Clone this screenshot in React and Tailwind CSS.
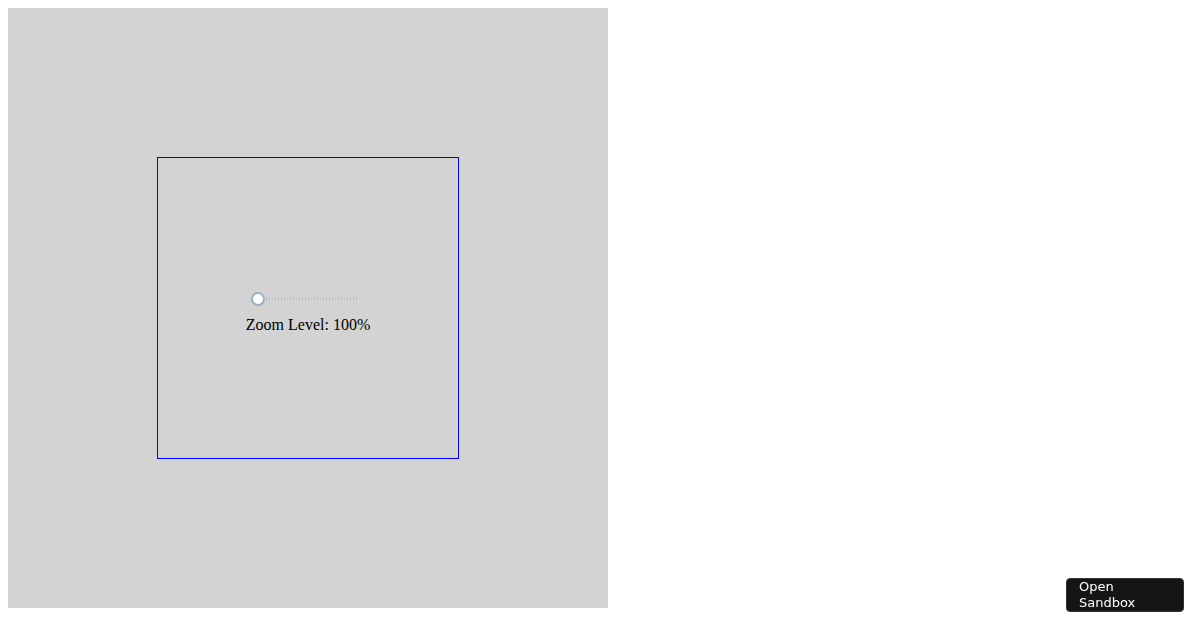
import { useState } from "react";

export default function App() {
  const [zoom, setZoom] = useState(100);

  return (
    <div className="min-h-screen bg-white p-2 font-['Liberation_Serif',serif] text-base text-black">
      <main className="flex aspect-square w-1/2 min-w-[600px] max-w-[600px] items-center justify-center bg-[#d3d3d3]">
        <section className="flex aspect-square w-[302px] flex-col items-center justify-center border border-[#0000ff] pt-2">
          {/* the track is two rows of 1px dots */}
          <input
            id="zoom"
            type="range"
            min="100"
            max="300"
            value={zoom}
            onChange={(e) => setZoom(Number(e.target.value))}
            className="h-4 w-[114px] cursor-pointer appearance-none bg-transparent pr-2 outline-none [&::-webkit-slider-runnable-track]:h-[3px] [&::-webkit-slider-runnable-track]:bg-[conic-gradient(from_270deg_at_1px_1px,#9fb4c7_90deg,transparent_0)] [&::-webkit-slider-runnable-track]:bg-size-[3px_2px] [&::-webkit-slider-thumb]:-mt-[5px] [&::-webkit-slider-thumb]:size-[14px] [&::-webkit-slider-thumb]:appearance-none [&::-webkit-slider-thumb]:rounded-full [&::-webkit-slider-thumb]:border-2 [&::-webkit-slider-thumb]:border-[#9fb0c0] [&::-webkit-slider-thumb]:bg-white"
          />
          <label htmlFor="zoom" className="mt-[10px] leading-[18px]">
            Zoom Level: {zoom}%
          </label>
        </section>
      </main>

      <button
        type="button"
        className="fixed right-4 bottom-[18px] w-[118px] rounded border border-[#343434] bg-[#151515] px-3 text-left font-['DejaVu_Sans',sans-serif] text-[13px] leading-4 text-white"
      >
        Open Sandbox
      </button>
    </div>
  );
}
